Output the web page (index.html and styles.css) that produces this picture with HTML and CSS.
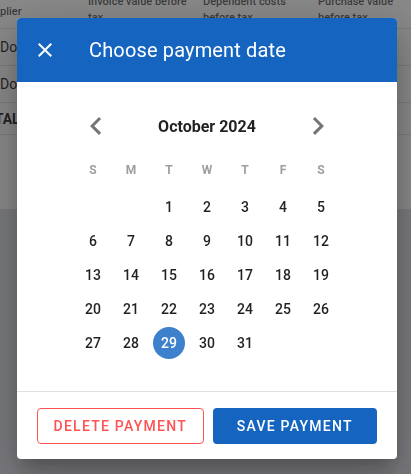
FILE: index.html
```html
<!DOCTYPE html>
<html lang="en">
<head>
    <meta charset="UTF-8">
    <meta name="viewport" content="width=device-width, initial-scale=1.0">
    <title>Payments</title>
    <link rel="stylesheet" href="styles.css">
</head>
<body>
    <div class="page">
        <div class="table-card">
            <table class="invoices">
                <thead>
                    <tr>
                        <th class="col-first">Supplier</th>
                        <th>Invoice value before tax</th>
                        <th>Dependent costs before tax</th>
                        <th>Purchase value before tax</th>
                    </tr>
                </thead>
                <tbody>
                    <tr>
                        <td class="col-first">Dorna Impex SRL</td>
                        <td>1.250,00</td>
                        <td>120,00</td>
                        <td>1.370,00</td>
                    </tr>
                    <tr>
                        <td class="col-first">Dorna Impex SRL</td>
                        <td>840,00</td>
                        <td>60,00</td>
                        <td>900,00</td>
                    </tr>
                    <tr class="total-row">
                        <td class="col-total">TOTAL</td>
                        <td>2.090,00</td>
                        <td>180,00</td>
                        <td>2.270,00</td>
                    </tr>
                </tbody>
            </table>
        </div>
    </div>

    <div class="overlay">
        <div class="dialog">
            <div class="dialog-header">
                <button class="close-btn" aria-label="Close">
                    <svg viewBox="0 0 24 24" width="24" height="24"><path fill="currentColor" d="M19,6.41L17.59,5L12,10.59L6.41,5L5,6.41L10.59,12L5,17.59L6.41,19L12,13.41L17.59,19L19,17.59L13.41,12L19,6.41Z"/></svg>
                </button>
                <h2 class="dialog-title">Choose payment date</h2>
            </div>
            <div class="dialog-body">
                <div class="calendar">
                    <div class="month-nav">
                        <button class="nav-btn" aria-label="Previous month">
                            <svg viewBox="0 0 24 24" width="36" height="36"><path fill="currentColor" d="M15.41,16.58L10.83,12L15.41,7.41L14,6L8,12L14,18L15.41,16.58Z"/></svg>
                        </button>
                        <div class="month-label">October 2024</div>
                        <button class="nav-btn" aria-label="Next month">
                            <svg viewBox="0 0 24 24" width="36" height="36"><path fill="currentColor" d="M8.59,16.58L13.17,12L8.59,7.41L10,6L16,12L10,18L8.59,16.58Z"/></svg>
                        </button>
                    </div>
                    <div class="weekdays">
                        <span>S</span><span>M</span><span>T</span><span>W</span><span>T</span><span>F</span><span>S</span>
                    </div>
                    <div class="days">
                        <span></span><span></span>
                        <span class="day">1</span><span class="day">2</span><span class="day">3</span><span class="day">4</span><span class="day">5</span>
                        <span class="day">6</span><span class="day">7</span><span class="day">8</span><span class="day">9</span><span class="day">10</span><span class="day">11</span><span class="day">12</span>
                        <span class="day">13</span><span class="day">14</span><span class="day">15</span><span class="day">16</span><span class="day">17</span><span class="day">18</span><span class="day">19</span>
                        <span class="day">20</span><span class="day">21</span><span class="day">22</span><span class="day">23</span><span class="day">24</span><span class="day">25</span><span class="day">26</span>
                        <span class="day">27</span><span class="day">28</span><span class="day selected">29</span><span class="day">30</span><span class="day">31</span>
                    </div>
                </div>
            </div>
            <div class="dialog-actions">
                <button class="btn btn-delete">Delete payment</button>
                <button class="btn btn-save">Save payment</button>
            </div>
        </div>
    </div>
</body>
</html>
```

FILE: styles.css
```css
* {
    margin: 0;
    padding: 0;
    box-sizing: border-box;
}
body {
    font-family: Roboto, "Noto Sans", sans-serif;
    background: #dfe0e8;
    min-height: 100vh;
    overflow: hidden;
}
.page {
    overflow: hidden;
}
.table-card {
    background: #ffffff;
    margin: -12px 0 0 -45px;
    height: 221px;
}
.invoices {
    border-collapse: collapse;
    table-layout: fixed;
    width: 456px;
}
.invoices th,
.invoices td {
    text-align: left;
    padding: 0 2px 0 12px;
    border-bottom: 1px solid rgba(0, 0, 0, 0.12);
}
.invoices th {
    width: 115px;
    height: 40px;
    font-size: 11px;
    font-weight: 500;
    line-height: 16px;
    color: rgba(0, 0, 0, 0.66);
    padding-top: 6px;
    padding-bottom: 2px;
}
.invoices th.col-first {
    width: 121px;
    padding-left: 26px;
    vertical-align: middle;
    padding-top: 10px;
}
.invoices th:last-child {
    width: 105px;
}
.invoices td {
    height: 37px;
    font-size: 14px;
    color: rgba(0, 0, 0, 0.87);
    white-space: nowrap;
    overflow: hidden;
}
.invoices td.col-first {
    padding-left: 45px;
}
.invoices td.col-total {
    padding-left: 22px;
}
.total-row td {
    height: 32px;
    font-weight: 700;
}
.overlay {
    position: fixed;
    inset: 0;
    background: rgba(33, 33, 33, 0.53);
}
.dialog {
    width: 380px;
    margin: 18px 0 0 17px;
    background: #ffffff;
    border-radius: 4px;
    overflow: hidden;
    box-shadow: 0 11px 15px -7px rgba(0, 0, 0, 0.2), 0 24px 38px 3px rgba(0, 0, 0, 0.14), 0 9px 46px 8px rgba(0, 0, 0, 0.12);
}
.dialog-header {
    height: 64px;
    background: #1565c0;
    color: #ffffff;
    display: flex;
    align-items: center;
    padding: 0 16px;
}
.close-btn {
    background: none;
    border: none;
    color: #ffffff;
    display: flex;
    cursor: pointer;
}
.dialog-title {
    margin-left: 32px;
    font-size: 20px;
    font-weight: 400;
    letter-spacing: 0.15px;
}
.dialog-body {
    padding: 24px 0 31px;
}
.calendar {
    width: 266px;
    margin: 0 auto;
}
.month-nav {
    height: 40px;
    display: flex;
    align-items: center;
    justify-content: space-between;
    padding: 0 4px;
    margin-bottom: 7px;
}
.nav-btn {
    background: none;
    border: none;
    color: #757575;
    display: flex;
    cursor: pointer;
}
.month-label {
    font-size: 16px;
    font-weight: 700;
    color: rgba(0, 0, 0, 0.87);
}
.weekdays,
.days {
    display: grid;
    grid-template-columns: repeat(7, 38px);
}
.weekdays {
    height: 34px;
    margin-bottom: 3px;
}
.weekdays span {
    display: flex;
    align-items: center;
    justify-content: center;
    font-size: 12px;
    font-weight: 700;
    color: #9e9e9e;
}
.days {
    grid-auto-rows: 34px;
}
.day {
    display: flex;
    align-items: center;
    justify-content: center;
    font-size: 14px;
    font-weight: 500;
    color: rgba(0, 0, 0, 0.87);
}
.day.selected {
    width: 32px;
    height: 32px;
    margin: auto;
    border-radius: 50%;
    background: #3d80cc;
    color: #ffffff;
}
.dialog-actions {
    border-top: 1px solid #e0e0e0;
    padding: 16px 20px 15px;
    display: flex;
    gap: 9px;
}
.btn {
    flex: 1;
    height: 36px;
    border-radius: 4px;
    font-family: Roboto, "Noto Sans", sans-serif;
    font-size: 14px;
    font-weight: 500;
    letter-spacing: 1.25px;
    text-transform: uppercase;
    cursor: pointer;
}
.btn-delete {
    background: #ffffff;
    color: #ff5252;
    border: 1px solid #ff5252;
}
.btn-save {
    background: #1565c0;
    color: #ffffff;
    border: none;
}
```
